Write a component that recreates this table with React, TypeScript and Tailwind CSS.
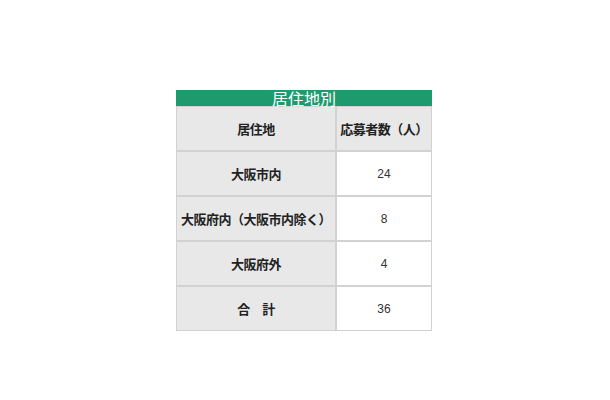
import { Fragment } from "react";

export default function App() {
  const rows: [string, string][] = [
    ["大阪市内", "24"],
    ["大阪府内（大阪市内除く）", "8"],
    ["大阪府外", "4"],
    ["合　計", "36"],
  ];
  const head =
    "h-[43px] bg-[#e8e8e8] flex items-center justify-center text-[13px] font-bold text-[#222] tracking-[-0.5px] font-['Noto_Sans_CJK_JP',sans-serif]";
  return (
    <div className="w-[610px] h-[400px] bg-white pl-[176px] pt-[90px] font-['Liberation_Sans','Noto_Sans_CJK_JP',sans-serif]">
      <div className="w-[256px]">
        <div className="h-[16px] bg-[#1f9a6f] flex items-center justify-center text-white text-[16px] leading-none font-['Noto_Sans_CJK_JP',sans-serif]">
          居住地別
        </div>
        <div className="grid grid-cols-[158px_94px] gap-[2px] p-[1px] bg-[#d2d2d2]">
          <div className={head}>居住地</div>
          <div className={head}>応募者数（人）</div>
          {rows.map(([a, b]) => (
            <Fragment key={a}>
              <div className={head}>{a}</div>
              <div className="h-[43px] bg-white flex items-center justify-center text-[12px] text-[#333]">{b}</div>
            </Fragment>
          ))}
        </div>
      </div>
    </div>
  );
}
